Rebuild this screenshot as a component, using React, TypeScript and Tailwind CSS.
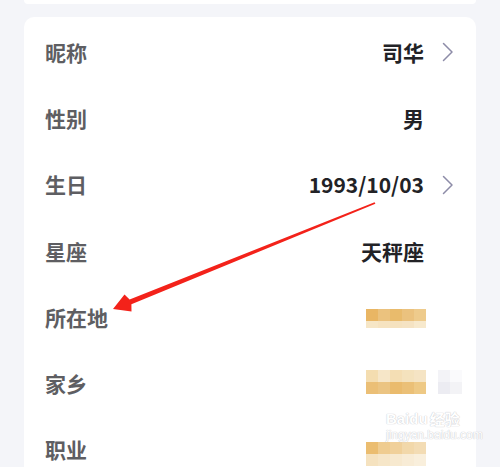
import React from "react";

type Row = { label: string; value?: string; chevron?: boolean; mosaic?: string[][]; extra?: boolean; shift?: number; short?: boolean };

const FONT = { fontFamily: '"Noto Sans CJK SC", "Noto Sans", sans-serif' };

const rows: Row[] = [
  { label: "昵称", value: "司华", chevron: true },
  { label: "性别", value: "男" },
  { label: "生日", value: "1993/10/03", chevron: true },
  { label: "星座", value: "天秤座" },
  {
    label: "所在地",
    mosaic: [
      ["#e9b664", "#ebc27e", "#e9bb6c", "#ebc27e", "#eecb8c"],
      ["#f6e6c6", "#f6e3c0", "#f5e2bf", "#f5e3c3", "#f7e9cd"],
    ],
    shift: 1,
    short: true,
  },
  {
    label: "家乡",
    mosaic: [
      ["#f4ddb0", "#f6e6c8", "#f4deb4", "#f4e2bd", "#f5e4c4"],
      ["#ebbf76", "#ebc482", "#eabb6d", "#ebc077", "#eec985"],
    ],
    extra: true,
    shift: -2,
  },
  {
    label: "职业",
    mosaic: [
      ["#ebbd70", "#efcc90", "#f0d09a", "#f2d8aa", "#f3dcb4"],
      ["#f5e2bf", "#f6e6c8", "#f7e9cf", "#f8ecd6", "#f9efdc"],
    ],
    shift: 4,
  },
];

function Chevron() {
  return (
    <svg width="12" height="20" viewBox="0 0 12 20" fill="none">
      <path d="M1.5 1.5 L10 10 L1.5 18.5" stroke="#8d8ca8" strokeWidth="1.5" strokeLinecap="round" strokeLinejoin="round" />
    </svg>
  );
}

function Mosaic({ m, extra, shift, short }: { m: string[][]; extra?: boolean; shift?: number; short?: boolean }) {
  return (
    <div className="relative mr-[-2px] flex flex-col" style={{ marginTop: (shift ?? 0) * 2 }}>
      {m.map((r, i) => (
        <div key={i} className="flex">
          {r.map((c, j) => (
            <div key={j} className={i === 1 && short ? "h-[7px] w-[12px]" : "h-[12px] w-[12px]"} style={{ backgroundColor: c }} />
          ))}
        </div>
      ))}
      {extra && (
        <div className="absolute left-[72px] top-0 flex flex-col">
          <div className="flex">
            <div className="h-[12px] w-[12px] bg-[#f3f3f7]" />
            <div className="h-[12px] w-[12px] bg-[#fafafc]" />
          </div>
          <div className="flex">
            <div className="h-[12px] w-[12px] bg-[#ececf2]" />
            <div className="h-[12px] w-[12px] bg-[#f3f3f6]" />
          </div>
        </div>
      )}
    </div>
  );
}

export default function App() {
  return (
    <div className="relative h-[467px] w-[500px] overflow-hidden bg-[#f4f5f9]" style={FONT}>
      <div className="mx-[24px] h-[4px] rounded-b-[6px] bg-white" />
      <div className="mx-[24px] mt-[13px] rounded-[10px] bg-white pt-[2px]">
        {rows.map((r) => (
          <div key={r.label} className="flex h-[66.3px] items-center pl-[21px] pr-[22px]">
            <div className="text-[21px] font-bold leading-none text-[#5e5e62]">{r.label}</div>
            <div className="flex-1" />
            {r.mosaic ? (
              <Mosaic m={r.mosaic} extra={r.extra} shift={r.shift} short={r.short} />
            ) : (
              <div className="text-[21px] font-bold leading-none text-[#222226]">{r.value}</div>
            )}
            <div className="ml-[18px] flex w-[12px] items-center">{r.chevron && <Chevron />}</div>
          </div>
        ))}
      </div>

      {/* annotation arrow */}
      <svg className="pointer-events-none absolute left-0 top-0" width="500" height="467" viewBox="0 0 500 467">
        <polygon
          points="374.6,202.3 129.6,299.5 124.5,294.5 113,309 131.5,311.5 131.4,304.2 375.4,203.7"
          fill="#f3221a"
        />
      </svg>

      {/* watermark */}
      <div className="pointer-events-none absolute left-[386px] top-[411px] flex flex-col items-start leading-none text-white" style={{ textShadow: "0 0 1px #c9c9cf, 0 0 1px #c9c9cf" }}>
        <div className="flex items-end">
          <span className="text-[15px] font-bold" style={{ fontFamily: '"Liberation Sans", sans-serif' }}>Bai</span>
          <span className="relative text-[15px] font-bold" style={{ fontFamily: '"Liberation Sans", sans-serif' }}>du</span>
          <span className="ml-[2px] text-[15px] font-bold">经验</span>
        </div>
        <div className="mt-[3px] text-[12px]" style={{ fontFamily: '"Liberation Sans", sans-serif' }}>jingyan.baidu.com</div>
      </div>
    </div>
  );
}
